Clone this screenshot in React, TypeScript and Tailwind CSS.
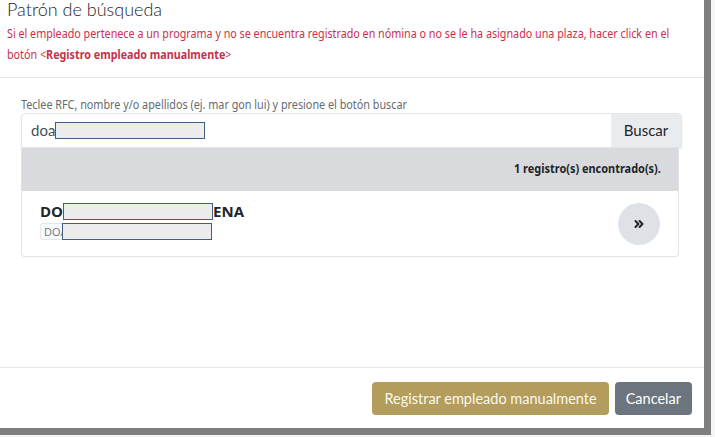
import React from 'react';
import { ChevronsRight } from 'lucide-react';

const Redacted = ({ className = '' }: { className?: string }) => (
  <span className={`inline-block bg-[#ececec] border border-[#3f5f86] align-middle ${className}`} />
);

export default function App() {
  return (
    <div className="w-[715px] h-[437px] bg-[#f6f6f6] overflow-hidden font-['Lato',sans-serif] text-[#212529]">
      <div className="w-[711px] h-[435px] bg-[#7f7f7f] pr-[7px] pb-[7px]">
        <div className="w-[704px] h-[428px] bg-white flex flex-col">
          {/* Header */}
          <div className="px-[7px] border-b border-[#e6e6e6] h-[78px]">
            <h1 className="text-[18px] font-light leading-[19px]">Patrón de búsqueda</h1>
            <p className="font-['Noto_Sans',sans-serif] text-[12.5px] leading-[21px] text-[#c9304c] mt-[4px] whitespace-nowrap origin-left scale-x-[0.86]">
              Si el empleado pertenece a un programa y no se encuentra registrado en nómina o no se le ha asignado una plaza, hacer click en el
              <br />
              botón &lt;<span className="font-bold">Registro empleado manualmente</span>&gt;
            </p>
          </div>

          {/* Body */}
          <div className="flex-1 pl-[21px] pr-[22px] pt-[19px]">
            <label className="font-['Noto_Sans',sans-serif] block text-[12px] leading-[16px] text-[#666b70] whitespace-nowrap origin-left scale-x-[0.9]">
              Teclee RFC, nombre y/o apellidos (ej. mar gon lui) y presione el botón buscar
            </label>
            <div className="flex h-[35px] rounded-t-[4px] border border-[#e4e6e8] shadow-[0_1px_2px_rgba(0,0,0,0.08)]">
              <div className="flex-1 flex items-center pl-[9px] text-[15px] text-[#495057]">
                doa<Redacted className="w-[150px] h-[17px]" />
              </div>
              <button className="w-[70px] bg-[#e9ecef] text-[15px] text-[#212529] rounded-tr-[4px]">Buscar</button>
            </div>

            <div className="mr-[3px] rounded-b-[4px] border border-t-0 border-[#e3e3e3]">
              <div className="h-[43px] bg-[#d9dadd] flex items-center justify-end pr-[17px]">
                <span className="font-['Noto_Sans',sans-serif] text-[12.5px] font-bold whitespace-nowrap origin-right scale-x-[0.875]">
                  1 registro(s) encontrado(s).
                </span>
              </div>
              <div className="h-[65px] flex justify-between pl-[18px] pr-[18px]">
                <div className="flex flex-col pt-[11px] font-['Open_Sans',sans-serif]">
                  <div className="flex items-center text-[15px] font-bold leading-[18px]">
                    DO<Redacted className="w-[150px] h-[17px]" />ENA
                  </div>
                  <div className="relative mt-[3px] w-[88px] h-[17px] rounded-[3px] bg-[#f8f9fa] border border-[#e6e6e6] pl-[3px] text-[11px] leading-[15px] text-[#6c757d]">
                    DO/
                    <Redacted className="absolute left-[21px] -top-[1px] w-[150px] h-[17px]" />
                  </div>
                </div>
                <button className="self-center w-[42px] h-[42px] rounded-full bg-[#dee2e6] flex items-center justify-center">
                  <ChevronsRight className="w-[14px] h-[14px]" strokeWidth={3.5} />
                </button>
              </div>
            </div>
          </div>

          {/* Footer */}
          <div className="h-[61px] border-t border-[#e6e6e6] flex items-start justify-end gap-[6px] pr-[12px] pt-[14px]">
            <button className="h-[33px] px-[12px] rounded-[4px] bg-[#b29d5d] text-[14.5px] text-[#fbf7ec]">
              Registrar empleado manualmente
            </button>
            <button className="h-[33px] px-[11px] rounded-[4px] bg-[#6c757d] text-[14.5px] text-white">
              Cancelar
            </button>
          </div>
        </div>
      </div>
    </div>
  );
}
